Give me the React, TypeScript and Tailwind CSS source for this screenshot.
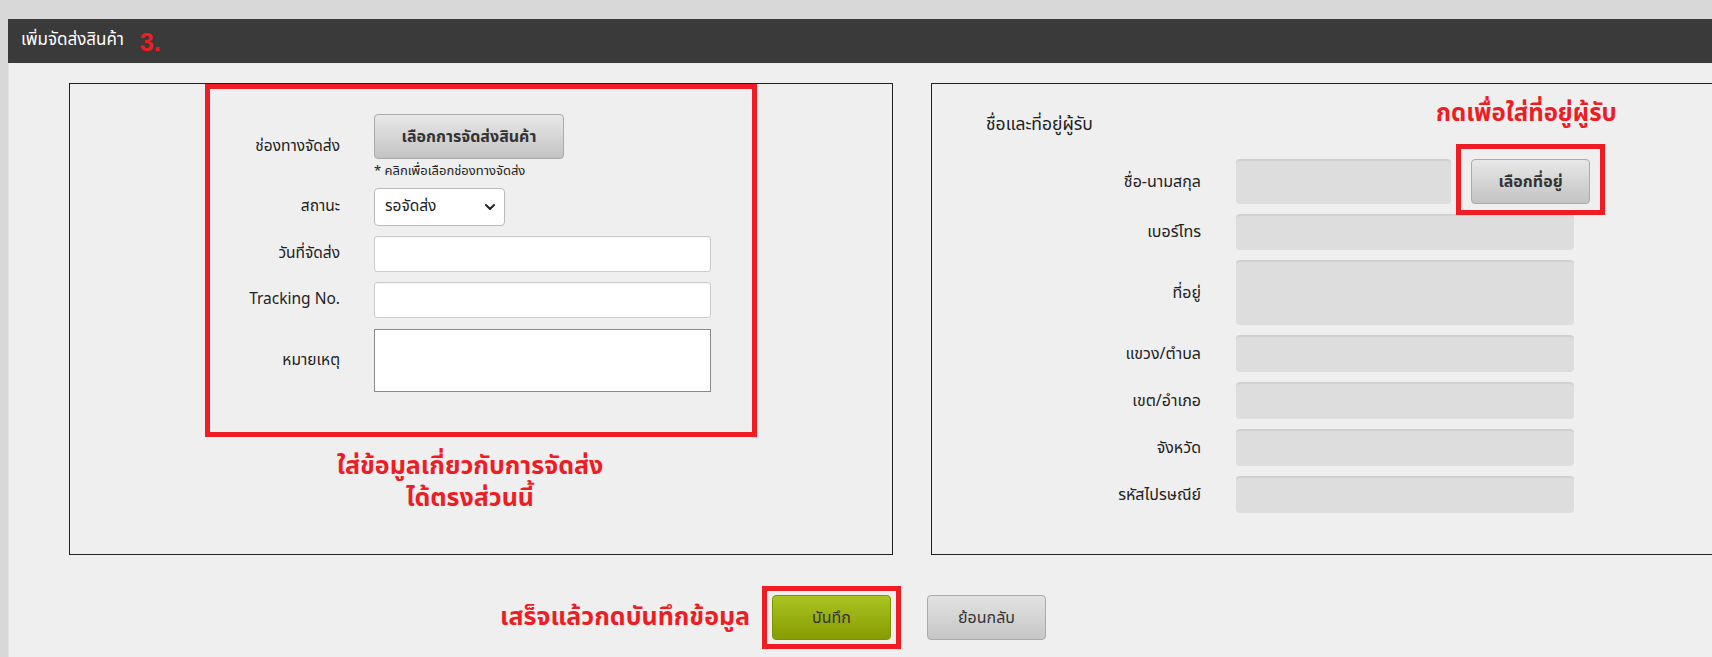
import React from "react"

const thai = { fontFamily: 'Tahoma, "Noto Sans Thai", "Noto Sans", "DejaVu Sans", sans-serif' }

const Label: React.FC<{ children: React.ReactNode; w: string; size?: string }> = ({ children, w, size = "text-[15.5px]" }) => (
  <div className={`${w} ${size} shrink-0 text-right text-[#222] whitespace-nowrap`}>{children}</div>
)

const GrayBox: React.FC<{ h: string; w?: string }> = ({ h, w = "w-[338px]" }) => (
  <div className={`${w} ${h} rounded-[4px] bg-[#dddddd] shadow-[inset_0_2px_1px_rgba(0,0,0,0.06)]`} />
)

const App: React.FC = () => {
  return (
    <div className="h-[657px] w-full overflow-hidden bg-[#d8d8d8] pt-[19px] pl-[8px] flex flex-col" style={thai}>
      {/* header */}
      <div className="h-[44px] shrink-0 bg-[#3a3a3a] flex items-center pl-[13px] gap-[16px]">
        <span className="text-[17px] text-white">เพิ่มจัดส่งสินค้า</span>
        <span className="text-[25px] font-bold text-[#ee1d24] leading-none pt-[3px]" style={{ fontFamily: '"Liberation Sans", Arial, sans-serif' }}>3.</span>
      </div>

      {/* content */}
      <div className="flex-1 bg-[#efefef] border-l border-[#e2e2e2] pt-[20px] pl-[60px]">
        <div className="flex gap-[38px]">
          {/* left panel */}
          <div className="w-[824px] h-[472px] shrink-0 border border-[#222] flex flex-col">
            <div className="ml-[135px] w-[552px] h-[353px] border-[5px] border-[#ee1d24] pt-[25px]">
              <div className="flex items-center">
                <Label w="w-[130px]">ช่องทางจัดส่ง</Label>
                <div className="ml-[34px] flex flex-col">
                  <button className="w-[190px] h-[45px] rounded-[4px] border border-[#aaa] bg-gradient-to-b from-[#e8e8e8] to-[#c3c3c3] text-[16px] font-bold text-[#333]">
                    เลือกการจัดส่งสินค้า
                  </button>
                  <div className="mt-[4px] text-[13px] leading-[16px] text-[#222]">* คลิกเพื่อเลือกช่องทางจัดส่ง</div>
                </div>
              </div>

              <div className="flex items-center mt-[9px]">
                <Label w="w-[130px]">สถานะ</Label>
                <div className="ml-[34px] w-[131px] h-[38px] rounded-[4px] border border-[#bbb] bg-white flex items-center justify-between pl-[10px] pr-[8px] text-[15.5px] text-[#222]">
                  <span>รอจัดส่ง</span>
                  <svg width="12" height="12" viewBox="0 0 12 12" fill="none">
                    <path d="M2 4l4 4 4-4" stroke="#222" strokeWidth="2" strokeLinecap="round" strokeLinejoin="round" />
                  </svg>
                </div>
              </div>

              <div className="flex items-center mt-[10px]">
                <Label w="w-[130px]">วันที่จัดส่ง</Label>
                <div className="ml-[34px] w-[337px] h-[36px] rounded-[3px] border border-[#ccc] bg-white shadow-[inset_0_1px_1px_rgba(0,0,0,0.05)]" />
              </div>

              <div className="flex items-center mt-[10px]">
                <Label w="w-[130px]">Tracking No.</Label>
                <div className="ml-[34px] w-[337px] h-[36px] rounded-[3px] border border-[#ccc] bg-white shadow-[inset_0_1px_1px_rgba(0,0,0,0.05)]" />
              </div>

              <div className="flex items-center mt-[11px]">
                <Label w="w-[130px]">หมายเหตุ</Label>
                <div className="ml-[34px] w-[337px] h-[63px] border border-[#8a8a8a] bg-white" />
              </div>
            </div>

            <div className="mt-[13px] pr-[22px] text-center text-[25px] leading-[32px] font-bold text-[#ee1d24]">
              ใส่ข้อมูลเกี่ยวกับการจัดส่ง
              <br />
              ได้ตรงส่วนนี้
            </div>
          </div>

          {/* right panel */}
          <div className="w-[824px] h-[472px] shrink-0 border border-[#222] pt-[16px]">
            <div className="flex h-[59px] items-start">
              <div className="w-[504px] shrink-0 pl-[54px] mt-[13px] text-[17.5px] leading-[24px] text-[#222]">ชื่อและที่อยู่ผู้รับ</div>
              <div className="text-[24px] leading-[28px] font-bold text-[#ee1d24] whitespace-nowrap">กดเพื่อใส่ที่อยู่ผู้รับ</div>
            </div>

            <div className="flex items-center">
              <Label w="w-[269px]" size="text-[16px]">ชื่อ-นามสกุล</Label>
              <div className="ml-[35px] flex items-center gap-[20px]">
                <GrayBox h="h-[45px]" w="w-[215px]" />
                <div className="relative">
                  <button className="w-[119px] h-[45px] rounded-[4px] border border-[#aaa] bg-gradient-to-b from-[#e8e8e8] to-[#c3c3c3] text-[16px] font-bold text-[#333]">
                    เลือกที่อยู่
                  </button>
                  <div className="absolute -left-[15px] -right-[15px] -top-[15px] -bottom-[11px] border-[5px] border-[#ee1d24] pointer-events-none" />
                </div>
              </div>
            </div>

            <div className="flex items-center mt-[10px]">
              <Label w="w-[269px]" size="text-[16px]">เบอร์โทร</Label>
              <div className="ml-[35px]"><GrayBox h="h-[36px]" /></div>
            </div>
            <div className="flex items-center mt-[10px]">
              <Label w="w-[269px]" size="text-[16px]">ที่อยู่</Label>
              <div className="ml-[35px]"><GrayBox h="h-[65px]" /></div>
            </div>
            <div className="flex items-center mt-[10px]">
              <Label w="w-[269px]" size="text-[16px]">แขวง/ตำบล</Label>
              <div className="ml-[35px]"><GrayBox h="h-[37px]" /></div>
            </div>
            <div className="flex items-center mt-[10px]">
              <Label w="w-[269px]" size="text-[16px]">เขต/อำเภอ</Label>
              <div className="ml-[35px]"><GrayBox h="h-[37px]" /></div>
            </div>
            <div className="flex items-center mt-[10px]">
              <Label w="w-[269px]" size="text-[16px]">จังหวัด</Label>
              <div className="ml-[35px]"><GrayBox h="h-[37px]" /></div>
            </div>
            <div className="flex items-center mt-[10px]">
              <Label w="w-[269px]" size="text-[16px]">รหัสไปรษณีย์</Label>
              <div className="ml-[35px]"><GrayBox h="h-[37px]" /></div>
            </div>
          </div>
        </div>

        {/* bottom actions */}
        <div className="flex items-center mt-[31px] pl-[431px]">
          <div className="w-[248px] shrink-0 whitespace-nowrap text-[25px] font-bold text-[#ee1d24]">เสร็จแล้วกดบันทึกข้อมูล</div>
          <div className="ml-[14px] border-[5px] border-[#ee1d24] px-[5px] py-[4px]">
            <button className="w-[119px] h-[45px] rounded-[4px] border border-[#7d9400] bg-gradient-to-b from-[#aac41f] to-[#869c00] text-[16px] text-[#333]">
              บันทึก
            </button>
          </div>
          <button className="ml-[26px] w-[119px] h-[45px] rounded-[4px] border border-[#aaa] bg-gradient-to-b from-[#e2e2e2] to-[#c6c6c6] text-[16px] text-[#333]">
            ย้อนกลับ
          </button>
        </div>
      </div>
    </div>
  )
}

export default App
